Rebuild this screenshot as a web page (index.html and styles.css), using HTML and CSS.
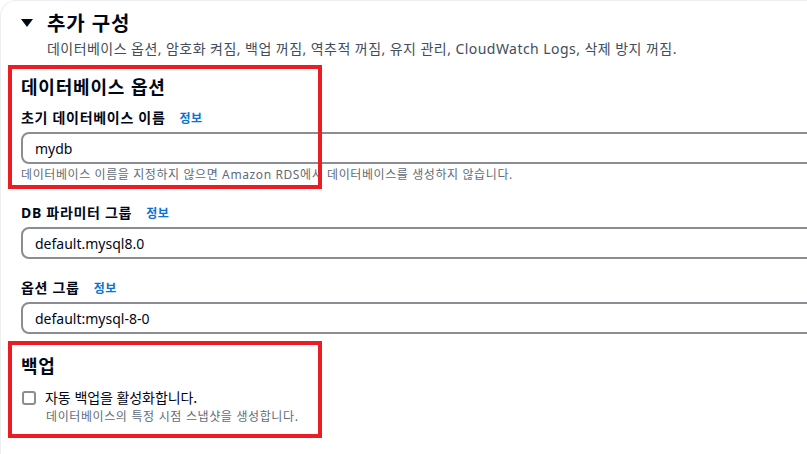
FILE: index.html
```html
<!DOCTYPE html>
<html lang="ko">
<head>
<meta charset="utf-8">
<link rel="stylesheet" href="styles.css">
</head>
<body>
<div class="panel">
  <div class="expander">
    <span class="caret"><svg width="12" height="10" viewBox="0 0 12 10"><path d="M0 1h12L6 9z" fill="#000716"/></svg></span>
    <h2 class="title">추가 구성</h2>
  </div>
  <p class="summary">데이터베이스 옵션, 암호화 켜짐, 백업 꺼짐, 역추적 꺼짐, 유지 관리, CloudWatch Logs, 삭제 방지 꺼짐.</p>

  <div class="content">
    <section class="group group-db">
      <h3 class="section-title">데이터베이스 옵션</h3>
      <div class="field">
        <div class="label-row"><span class="label">초기 데이터베이스 이름</span><a class="info">정보</a></div>
        <div class="input">mydb</div>
        <div class="hint">데이터베이스 이름을 지정하지 않으면 Amazon RDS에서 데이터베이스를 생성하지 않습니다.</div>
      </div>
      <div class="field">
        <div class="label-row"><span class="label">DB 파라미터 그룹</span><a class="info">정보</a></div>
        <div class="input">default.mysql8.0</div>
      </div>
      <div class="field">
        <div class="label-row"><span class="label">옵션 그룹</span><a class="info">정보</a></div>
        <div class="input">default:mysql-8-0</div>
      </div>
    </section>

    <section class="group group-backup">
      <h3 class="section-title">백업</h3>
      <div class="check-row">
        <span class="checkbox"></span>
        <div class="check-text">
          <div class="check-label">자동 백업을 활성화합니다.</div>
          <div class="check-desc">데이터베이스의 특정 시점 스냅샷을 생성합니다.</div>
        </div>
      </div>
    </section>
  </div>

  <div class="highlight hl-1"></div>
  <div class="highlight hl-2"></div>
</div>
</body>
</html>
```

FILE: styles.css
```css
* { box-sizing: border-box; }
html, body { margin: 0; padding: 0; background: #ffffff; }
body {
  font-family: "Noto Sans", "Noto Sans CJK KR", sans-serif;
  color: #000716;
  width: 807px;
  height: 454px;
  overflow: hidden;
}
.panel {
  position: relative;
  border-top: 1px solid #eceef0;
  border-left: 1px solid #eceef0;
  border-top-left-radius: 16px;
  padding: 9px 0 0 20px;
  height: 470px;
}
.expander {
  display: flex;
  align-items: center;
  height: 26px;
}
.caret { width: 26px; display: flex; align-items: center; }
.caret svg { display: block; }
.title {
  margin: 0;
  font-family: "Noto Sans CJK KR", sans-serif;
  font-size: 20px;
  font-weight: 700;
  line-height: 26px;
  letter-spacing: 0.8px;
}
.summary {
  margin: 3px 0 0 26px;
  font-family: "Noto Sans", "Noto Sans CJK KR", sans-serif;
  font-size: 14px;
  line-height: 20px;
  letter-spacing: 0.45px;
  color: #414d5c;
}
.content { margin-top: 15px; }
.group-backup { margin-top: 19px; }
.section-title {
  margin: 0;
  font-family: "Noto Sans CJK KR", sans-serif;
  font-size: 18px;
  font-weight: 700;
  line-height: 24px;
  letter-spacing: 0.8px;
}
.field { margin-top: 8px; }
.field + .field { margin-top: 17px; }
.label-row { display: flex; align-items: center; height: 22px; gap: 14px; }
.label {
  font-family: "Noto Sans", "Noto Sans CJK KR", sans-serif;
  font-size: 14px;
  font-weight: 700;
  letter-spacing: 0.7px;
  color: #000716;
}
.info {
  font-family: "Noto Sans CJK KR", sans-serif;
  font-size: 12px;
  font-weight: 700;
  letter-spacing: 0.5px;
  color: #0972d3;
}
.input {
  margin-top: 4px;
  height: 32px;
  width: 820px;
  border: 2px solid #8c8c94;
  border-radius: 8px;
  padding: 0 12px;
  display: flex;
  align-items: center;
  font-family: "Noto Sans", "Noto Sans CJK KR", sans-serif;
  font-size: 14px;
  color: #000716;
}
.hint {
  margin-top: 2px;
  font-family: "Noto Sans", "Noto Sans CJK KR", sans-serif;
  font-size: 12px;
  line-height: 18px;
  letter-spacing: 0.6px;
  color: #5f6b7a;
}
.check-row { display: flex; gap: 9px; margin-top: 10px; }
.checkbox {
  width: 14px;
  height: 14px;
  border: 2px solid #8c8c94;
  border-radius: 3px;
  margin-top: 4px;
  margin-left: 1px;
  flex: none;
}
.check-label {
  font-family: "Noto Sans CJK KR", sans-serif;
  font-size: 14px;
  line-height: 20px;
  letter-spacing: -0.1px;
  color: #000716;
}
.check-desc {
  margin-left: 1px;
  font-family: "Noto Sans CJK KR", sans-serif;
  font-size: 12px;
  line-height: 18px;
  letter-spacing: 0.6px;
  color: #5f6b7a;
}
.highlight {
  position: absolute;
  border: 4px solid #ec1c24;
  pointer-events: none;
}
.hl-1 { left: 7px; top: 64px; width: 314px; height: 124px; }
.hl-2 { left: 7px; top: 340px; width: 314px; height: 97px; }
```
